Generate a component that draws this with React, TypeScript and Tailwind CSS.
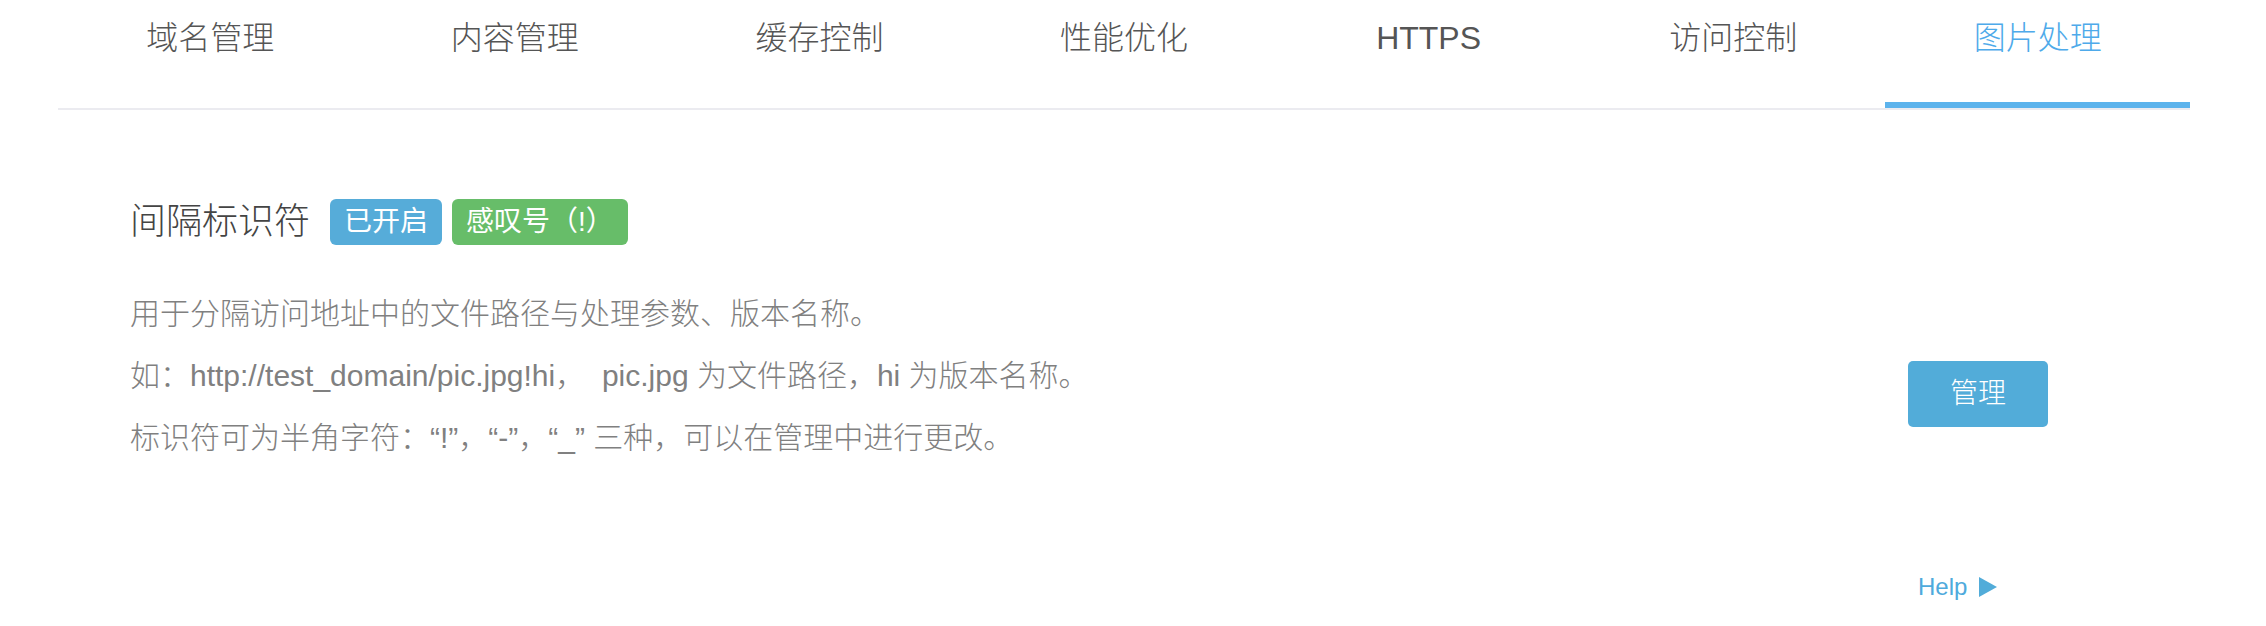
const tabs = ['域名管理', '内容管理', '缓存控制', '性能优化', 'HTTPS', '访问控制', '图片处理']

const lines = [
  '用于分隔访问地址中的文件路径与处理参数、版本名称。',
  '如：http://test_domain/pic.jpg!hi，  pic.jpg 为文件路径，hi 为版本名称。',
  '标识符可为半角字符：“!”，“-”，“_” 三种，可以在管理中进行更改。',
]

function Tabs({ active }: { active: number }) {
  return (
    <div className="flex border-b-2 border-[#ebebf0]">
      {tabs.map((tab, i) => (
        <div
          key={tab}
          className={
            i === active
              ? 'flex-1 h-[108px] pt-[22px] text-center text-[32px] leading-[32px] font-light text-[#4eaaea] border-b-[6px] border-[#5cb3ec]'
              : 'flex-1 h-[108px] pt-[22px] text-center text-[32px] leading-[32px] font-light text-[#555] border-b-[6px] border-transparent'
          }
        >
          {tab}
        </div>
      ))}
    </div>
  )
}

export default function App() {
  return (
    <div
      className="w-full h-[626px] bg-white overflow-hidden"
      style={{ fontFamily: '"Liberation Sans", "Noto Sans CJK SC", sans-serif' }}
    >
      <div className="ml-[58px] w-[2132px]">
        <Tabs active={6} />

        <div className="flex justify-between">
          {/* Setting description */}
          <div className="pl-[72px] pt-[89px]">
            <div className="flex items-center h-[46px]">
              <h3 className="text-[36px] leading-[46px] font-light text-[#444] mr-[20px]">间隔标识符</h3>
              <span className="h-[46px] px-[14px] rounded-[6px] bg-[#56acd9] text-white text-[28px] leading-[46px]">
                已开启
              </span>
              <span className="ml-[10px] h-[46px] px-[14px] rounded-[6px] bg-[#67bd69] text-white text-[28px] leading-[46px]">
                感叹号（!）
              </span>
            </div>
            <div className="mt-[38px]">
              {lines.map((line) => (
                <p key={line} className="text-[30px] leading-[62px] font-light text-[#808080] whitespace-pre">
                  {line}
                </p>
              ))}
            </div>
          </div>

          {/* Actions */}
          <div className="w-[140px] mr-[142px] flex flex-col items-start">
            <button className="mt-[251px] w-[140px] h-[66px] rounded-[5px] bg-[#52acd9] text-white text-[28px] font-light">
              管理
            </button>
            <a className="mt-[148px] ml-[10px] flex items-center gap-[12px] text-[24px] leading-[24px] text-[#4eaadc]">
              Help
              <svg width="18" height="20" viewBox="0 0 18 20" className="fill-[#52acd9]">
                <path d="M0 0 L18 10 L0 20 Z" />
              </svg>
            </a>
          </div>
        </div>
      </div>
    </div>
  )
}
